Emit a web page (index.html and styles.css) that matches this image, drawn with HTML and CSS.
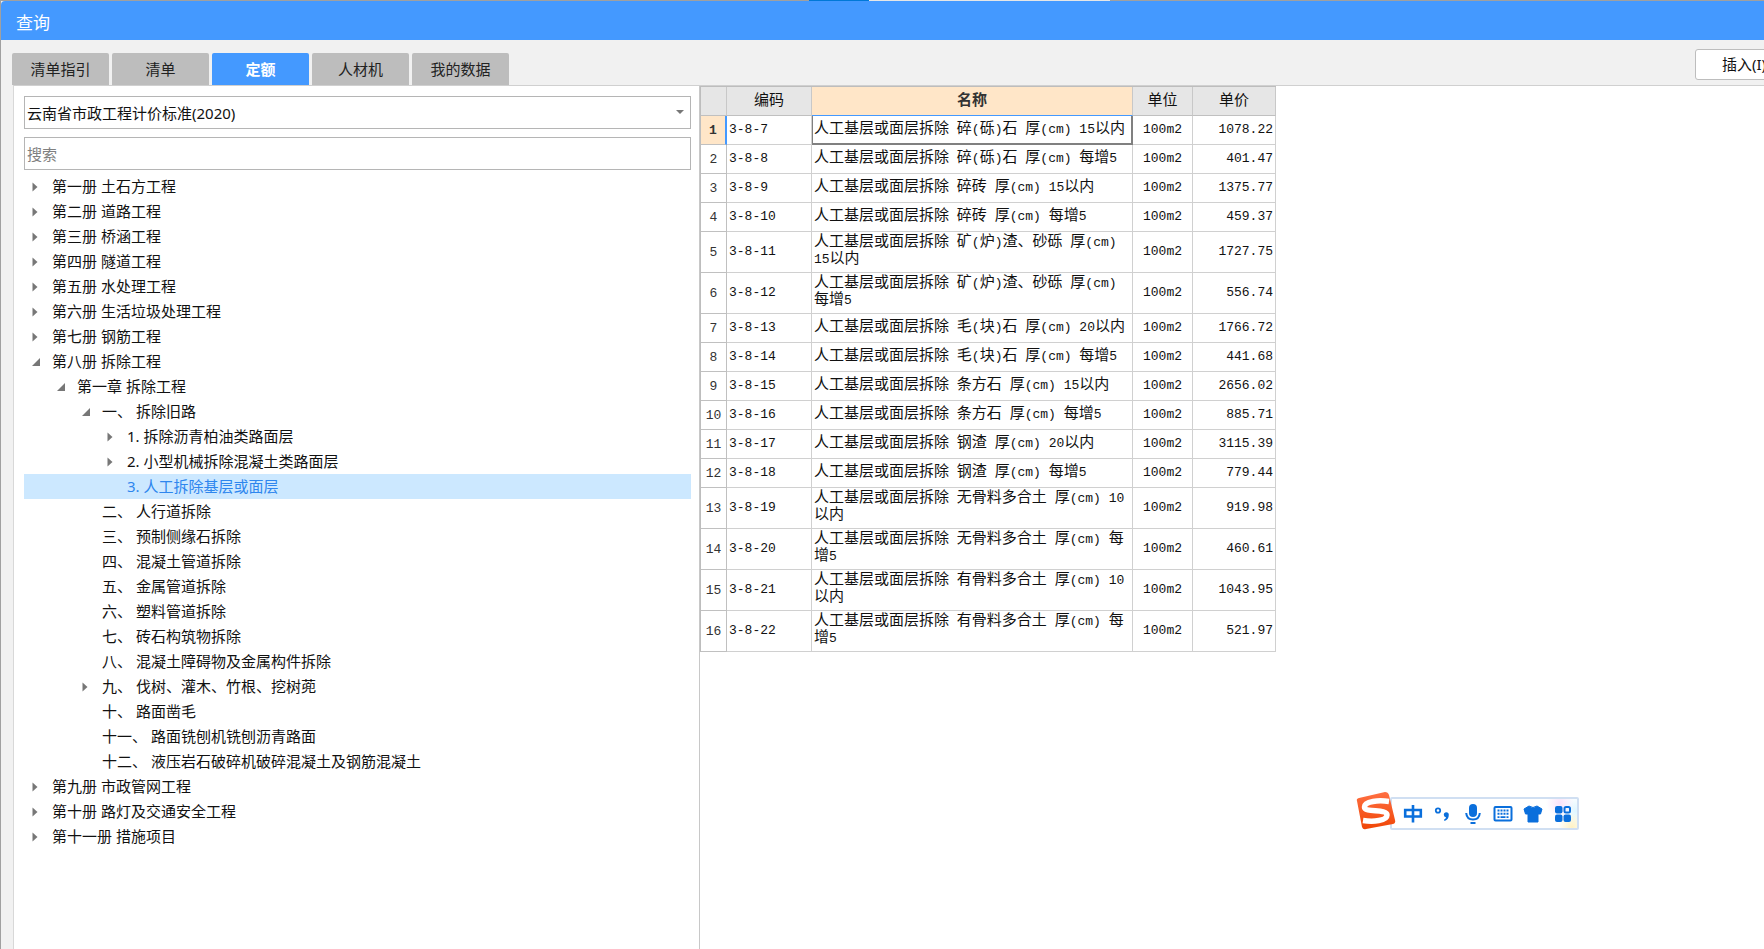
FILE: index.html
```html
<!DOCTYPE html>
<html lang="zh-CN">
<head>
<meta charset="utf-8">
<title>查询</title>
<link rel="stylesheet" href="styles.css">
</head>
<body>
<div class="backdrop"><span class="backdrop-blue"></span><span class="backdrop-light"></span></div>
<div class="window">
  <header class="titlebar"><h1>查询</h1></header>
  <div class="toolbar">
    <nav class="tabs">
      <button class="tab">清单指引</button>
      <button class="tab">清单</button>
      <button class="tab active">定额</button>
      <button class="tab">人材机</button>
      <button class="tab">我的数据</button>
    </nav>
    <button class="insert">插入(I)</button>
  </div>
  <main class="content">
    <section class="side">
      <select class="field" aria-label="标准"><option>云南省市政工程计价标准(2020)</option></select>
      <input class="field search" type="text" placeholder="搜索" aria-label="搜索">
      <ul class="tree" id="tree"></ul>
    </section>
    <section class="data">
      <table class="grid">
        <colgroup><col class="c-no"><col class="c-code"><col class="c-name"><col class="c-unit"><col class="c-price"></colgroup>
        <thead><tr><th></th><th>编码</th><th class="current">名称</th><th>单位</th><th>单价</th></tr></thead>
        <tbody id="rows"></tbody>
      </table>
    </section>
  </main>
</div>
<div class="ime">
  <svg class="ime-logo" viewBox="0 0 40 40" width="40" height="40">
    <defs><linearGradient id="lg" x1="0" y1="0" x2="0" y2="1"><stop offset="0" stop-color="#ff7043"/><stop offset="1" stop-color="#f04606"/></linearGradient></defs>
    <path d="M3 6 L29 0 Q32 0 33 3 L39 28 Q40 31 37 32 L10 37 Q7 38 6 35 L1 9 Q0 7 3 6Z" fill="url(#lg)"/>
    <path d="M33 9.500 C23 8 8.500 9 8.500 15 C8.500 21 31 16.500 31 23 C31 29 17 30 7 28.500" fill="none" stroke="#fff" stroke-width="5.500"/>
  </svg>
  <div class="ime-bar">
    <svg viewBox="0 0 20 20"><path d="M2.200 6H17.800V12.500H2.200ZM10 1V18.500" fill="none" stroke="#0a6fdc" stroke-width="2.600"/></svg>
    <svg viewBox="0 0 20 20"><circle cx="5" cy="6.500" r="2.200" fill="none" stroke="#0a6fdc" stroke-width="1.800"/><path d="M10.800 10.800a2.500 2.500 0 1 1 5 0q0 4.800-4.200 6.200l-.7-1.200q1.900-1 2.100-2.600-2.200-.2-2.200-2.400z" fill="#0a6fdc"/></svg>
    <svg viewBox="0 0 20 20"><rect x="6" y="0" width="8" height="13" rx="4" fill="#0a6fdc"/><path d="M3.200 9q.5 6.500 6.800 6.500t6.800-6.500M7.500 19h5" fill="none" stroke="#0a6fdc" stroke-width="2"/></svg>
    <svg viewBox="0 0 20 20"><rect x="1.500" y="3" width="17" height="13.500" rx="1" fill="none" stroke="#0a6fdc" stroke-width="2"/><path d="M4.500 6.500h11M4.500 9.800h11" stroke="#0a6fdc" stroke-width="2" stroke-dasharray="2 1"/><path d="M4.500 13.200h2m1 0h5m1 0h2" stroke="#0a6fdc" stroke-width="1.800"/></svg>
    <svg viewBox="0 0 20 20"><path d="M6 2q4 3 8 0l5 3-1.500 5H15V18H5V10H2.500L1 5z" fill="#0a6fdc" stroke="#0a6fdc" stroke-linejoin="round"/></svg>
    <svg viewBox="0 0 20 20"><g fill="#0a6fdc"><rect x="2" y="2" width="7.500" height="7.500" rx="2"/><rect x="2" y="10.500" width="7.500" height="7.500" rx="2"/><rect x="10.500" y="10.500" width="7.500" height="7.500" rx="2"/></g><rect x="11.500" y="3" width="5.500" height="5.500" rx="1.500" fill="none" stroke="#0a6fdc" stroke-width="2"/></svg>
  </div>
</div>
<script src="app.js"></script>
</body>
</html>
```
FILE: styles.css
```css
* { box-sizing: border-box; }
html, body { height: 100%; }
body {
  margin: 0;
  display: flex;
  flex-direction: column;
  overflow: hidden;
  background: #f1f1f1;
  color: #111;
  font: 15px/25px "Noto Sans", "Noto Sans CJK SC", sans-serif;
}
button, input, select { font: inherit; color: inherit; margin: 0; }
.backdrop { flex: none; display: flex; height: 1px; background: #a0a0a0; padding-left: 809px; }
.backdrop-blue { width: 60px; background: #0078d7; }
.backdrop-light { width: 241px; background: #e6e6e6; }
.window {
  flex: 1;
  min-height: 0;
  display: flex;
  flex-direction: column;
  border-left: 1px solid #a0a0a0;
  overflow: hidden;
}
.titlebar { flex: none; height: 39px; padding: 3px 15px 0; background: #4499ff; border-top-left-radius: 4px; display: flex; align-items: center; }
.titlebar h1 { margin: 0; font-size: 17px; font-weight: 400; color: #fff; }
.toolbar { flex: none; height: 45px; padding: 0 0 0 11px; display: flex; justify-content: space-between; align-items: flex-end; }
.tabs { display: flex; gap: 3px; }
.tab { width: 97px; height: 32px; padding: 0; border: 0; border-radius: 2px 2px 0 0; background: #bdbdbd; color: #222; line-height: 30px; }
.tab.active { background: #4499ff; color: #fff; font-weight: 700; }
.insert { width: 98px; height: 31px; margin: 0 -29px 5px 0; padding: 0; border: 1px solid #bdbdbd; border-radius: 3px; background: #fff; line-height: 27px; }
.content { flex: 1; min-height: 0; margin-left: 12px; display: flex; background: #fff; border-top: 1px solid #d0d0d0; border-left: 1px solid #d8d8d8; }
.side { flex: 0 0 686px; padding: 10px 8px 0 10px; border-right: 1px solid #c8c8c8; display: flex; flex-direction: column; }
.field { width: 100%; height: 33px; margin-bottom: 8px; padding: 1px 2px 0; border: 1px solid #b5b5b5; border-radius: 0; background: #fff; outline: 0; }
select.field {
  appearance: none;
  background: #fff url("data:image/svg+xml,%3Csvg xmlns='http://www.w3.org/2000/svg' width='8' height='5'%3E%3Cpath d='M0 0h8l-4 4z' fill='%23777'/%3E%3C/svg%3E") no-repeat right 6px center;
}
.search { margin-bottom: 4px; }
.search::placeholder { color: #808080; opacity: 1; }
.tree { list-style: none; margin: 0; padding: 0; }
.node { height: 25px; display: flex; align-items: center; white-space: pre; padding-left: 7px; }
.node svg { flex: none; width: 10px; height: 10px; margin-right: 11px; }
.level-1 { padding-left: 32px; }
.level-2 { padding-left: 57px; }
.level-3 { padding-left: 82px; }
.node.selected { background: #cce8ff; color: #2e86ee; }
.data { flex: 1; min-width: 0; }
.grid {
  table-layout: fixed;
  width: 576px;
  border-collapse: separate;
  border-spacing: 0;
  border-top: 1px solid #bdbdbd;
  border-left: 1px solid #bdbdbd;
  font-family: "Liberation Mono", "Noto Sans CJK SC", monospace;
  line-height: 17px;
}
.c-no { width: 26px; }
.c-code { width: 85px; }
.c-name { width: 321px; }
.c-unit { width: 60px; }
.c-price { width: 83px; }
.grid th { height: 29px; padding: 0; font-weight: 400; background: #e6e6e6; border-right: 1px solid #c8c8c8; border-bottom: 1px solid #c0c0c0; }
.grid thead .current { font-weight: 700; background: #ffe6c8; color: #333; border-bottom-color: #4499ff; }
.grid td { height: 29px; padding: 2px 2px 4px; border-right: 1px solid #d0d0d0; border-bottom: 1px solid #d0d0d0; }
.grid tbody th { height: 29px; background: #fff; color: #333; border-color: #c0c0c0; }
.half, .mono { font-size: 13px; }
.half { line-height: 1; }
.grid .unit { text-align: center; }
.grid .price { text-align: right; }
.grid tbody .row-current { background: #ffe6c8; font-weight: 700; border-right: 2px solid #4499ff; }
.grid .cell-current { box-shadow: inset 1px 0 #808080, inset -1px -1px #808080; border-color: #808080; }
.ime { position: absolute; left: 1356px; top: 792px; display: flex; align-items: flex-start; }
.ime-logo { position: relative; z-index: 1; }
.ime-bar {
  height: 33px;
  margin: 5px 0 0 -6px;
  padding: 0 4px 0 11px;
  display: flex;
  align-items: center;
  gap: 10px;
  border: 2px solid #d0dff2;
  border-radius: 2px;
  background:
    radial-gradient(circle at 168px 4px, #f8e2fa, transparent 14px),
    radial-gradient(circle at 180px 28px, #fff2c4, transparent 14px),
    radial-gradient(circle at 184px 12px, #dff6ff, transparent 16px),
    #fff;
}
.ime-bar svg { width: 20px; height: 20px; }
```
FILE: app.js
```js
const nodes = [
  [0, "c", "第一册 土石方工程"], [0, "c", "第二册 道路工程"], [0, "c", "第三册 桥涵工程"],
  [0, "c", "第四册 隧道工程"], [0, "c", "第五册 水处理工程"], [0, "c", "第六册 生活垃圾处理工程"],
  [0, "c", "第七册 钢筋工程"], [0, "o", "第八册 拆除工程"], [1, "o", "第一章 拆除工程"],
  [2, "o", "一、 拆除旧路"], [3, "c", "1. 拆除沥青柏油类路面层"], [3, "c", "2. 小型机械拆除混凝土类路面层"],
  [3, "", "3. 人工拆除基层或面层", true], [2, "", "二、 人行道拆除"], [2, "", "三、 预制侧缘石拆除"],
  [2, "", "四、 混凝土管道拆除"], [2, "", "五、 金属管道拆除"], [2, "", "六、 塑料管道拆除"],
  [2, "", "七、 砖石构筑物拆除"], [2, "", "八、 混凝土障碍物及金属构件拆除"],
  [2, "c", "九、 伐树、灌木、竹根、挖树蔸"], [2, "", "十、 路面凿毛"],
  [2, "", "十一、 路面铣刨机铣刨沥青路面"], [2, "", "十二、 液压岩石破碎机破碎混凝土及钢筋混凝土"],
  [0, "c", "第九册 市政管网工程"], [0, "c", "第十册 路灯及交通安全工程"], [0, "c", "第十一册 措施项目"]
];
const arrows = { c: '<path d="M1.500 .5L6.500 5l-5 4.500z" fill="#777"/>', o: '<path d="M9 1v8H1z" fill="#777"/>', "": "" };
document.getElementById("tree").innerHTML = nodes.map(([level, state, text, selected]) =>
  `<li class="node level-${level}${selected ? " selected" : ""}"><svg viewBox="0 0 10 10">${arrows[state]}</svg>${text}</li>`
).join("");

const rows = [
  ["碎(砾)石 厚(cm) 15以内", "1078.22"], ["碎(砾)石 厚(cm) 每增5", "401.47"],
  ["碎砖 厚(cm) 15以内", "1375.77"], ["碎砖 厚(cm) 每增5", "459.37"],
  ["矿(炉)渣、砂砾 厚(cm) 15以内", "1727.75"], ["矿(炉)渣、砂砾 厚(cm) 每增5", "556.74"],
  ["毛(块)石 厚(cm) 20以内", "1766.72"], ["毛(块)石 厚(cm) 每增5", "441.68"],
  ["条方石 厚(cm) 15以内", "2656.02"], ["条方石 厚(cm) 每增5", "885.71"],
  ["钢渣 厚(cm) 20以内", "3115.39"], ["钢渣 厚(cm) 每增5", "779.44"],
  ["无骨料多合土 厚(cm) 10以内", "919.98"], ["无骨料多合土 厚(cm) 每增5", "460.61"],
  ["有骨料多合土 厚(cm) 10以内", "1043.95"], ["有骨料多合土 厚(cm) 每增5", "521.97"]
];
const halfWidth = text => text.replace(/[\x20-\x7e]+/g, '<span class="half">$&</span>');
document.getElementById("rows").innerHTML = rows.map(([name, price], i) =>
  `<tr><th class="mono${i ? "" : " row-current"}">${i + 1}</th><td class="mono">3-8-${i + 7}</td>` +
  `<td${i ? "" : ' class="cell-current"'}>${halfWidth("人工基层或面层拆除 " + name)}</td>` +
  `<td class="mono unit">100m2</td><td class="mono price">${price}</td></tr>`
).join("");
```
